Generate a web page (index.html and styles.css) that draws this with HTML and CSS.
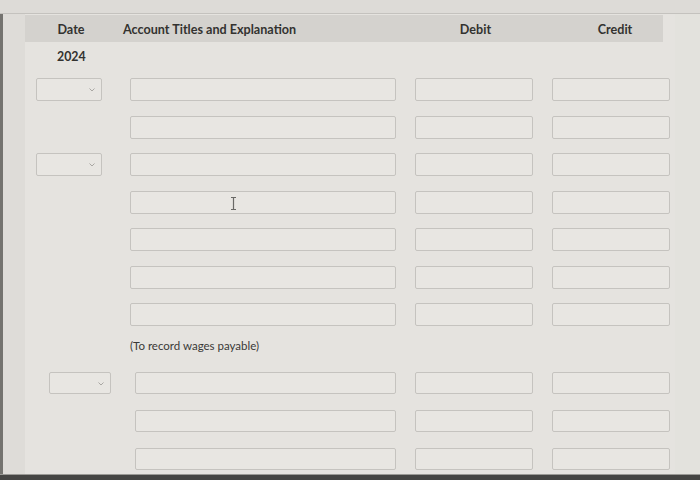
FILE: index.html
```html
<!DOCTYPE html>
<html>
<head>
<meta charset="utf-8">
<link rel="stylesheet" href="styles.css">
</head>
<body>
<div class="screen">
  <div class="topbar"></div>
  <div class="frame">
    <div class="side-left"></div>
    <div class="main">
      <div class="head">
        <div class="c-date">Date</div>
        <div class="c-acct">Account Titles and Explanation</div>
        <div class="c-num">Debit</div>
        <div class="c-num">Credit</div>
      </div>
      <div class="year">2024</div>
      <div class="rows">
        <div class="row">
          <div class="c-date"><div class="sel"><svg class="chev" width="6" height="4" viewBox="0 0 6 4"><path d="M0.5 0.5 L3 3 L5.5 0.5" fill="none" stroke="#a9a7a3" stroke-width="1"/></svg></div></div>
          <div class="c-acct"><div class="inp"></div></div>
          <div class="c-num"><div class="inp"></div></div>
          <div class="c-num"><div class="inp"></div></div>
        </div>
        <div class="row">
          <div class="c-date"></div>
          <div class="c-acct"><div class="inp"></div></div>
          <div class="c-num"><div class="inp"></div></div>
          <div class="c-num"><div class="inp"></div></div>
        </div>
        <div class="row">
          <div class="c-date"><div class="sel"><svg class="chev" width="6" height="4" viewBox="0 0 6 4"><path d="M0.5 0.5 L3 3 L5.5 0.5" fill="none" stroke="#a9a7a3" stroke-width="1"/></svg></div></div>
          <div class="c-acct"><div class="inp"></div></div>
          <div class="c-num"><div class="inp"></div></div>
          <div class="c-num"><div class="inp"></div></div>
        </div>
        <div class="row">
          <div class="c-date"></div>
          <div class="c-acct"><div class="inp"><svg class="ibeam" width="7" height="13" viewBox="0 0 7 13"><path d="M1 0.5 H6 M3.5 0.5 V12.5 M1 12.5 H6" fill="none" stroke="#6a6966" stroke-width="1.2"/></svg></div></div>
          <div class="c-num"><div class="inp"></div></div>
          <div class="c-num"><div class="inp"></div></div>
        </div>
        <div class="row">
          <div class="c-date"></div>
          <div class="c-acct"><div class="inp"></div></div>
          <div class="c-num"><div class="inp"></div></div>
          <div class="c-num"><div class="inp"></div></div>
        </div>
        <div class="row">
          <div class="c-date"></div>
          <div class="c-acct"><div class="inp"></div></div>
          <div class="c-num"><div class="inp"></div></div>
          <div class="c-num"><div class="inp"></div></div>
        </div>
        <div class="row">
          <div class="c-date"></div>
          <div class="c-acct"><div class="inp"></div></div>
          <div class="c-num"><div class="inp"></div></div>
          <div class="c-num"><div class="inp"></div></div>
        </div>
      </div>
      <div class="note">(To record wages payable)</div>
      <div class="rows rows2">
        <div class="row">
          <div class="c-date"><div class="sel sel2"><svg class="chev" width="6" height="4" viewBox="0 0 6 4"><path d="M0.5 0.5 L3 3 L5.5 0.5" fill="none" stroke="#a9a7a3" stroke-width="1"/></svg></div></div>
          <div class="c-acct"><div class="inp inp2"></div></div>
          <div class="c-num"><div class="inp"></div></div>
          <div class="c-num"><div class="inp"></div></div>
        </div>
        <div class="row">
          <div class="c-date"></div>
          <div class="c-acct"><div class="inp inp2"></div></div>
          <div class="c-num"><div class="inp"></div></div>
          <div class="c-num"><div class="inp"></div></div>
        </div>
        <div class="row">
          <div class="c-date"></div>
          <div class="c-acct"><div class="inp inp2"></div></div>
          <div class="c-num"><div class="inp"></div></div>
          <div class="c-num"><div class="inp"></div></div>
        </div>
      </div>
    </div>
    <div class="side-right"></div>
  </div>
  <div class="bottombar"></div>
</div>
</body>
</html>
```
FILE: styles.css
```css
* { box-sizing: border-box; }
html, body { margin: 0; padding: 0; }
body {
  width: 700px;
  height: 480px;
  overflow: hidden;
  background: #e5e3df;
  font-family: Lato, "Open Sans", "Liberation Sans", sans-serif;
  color: #333230;
}
.screen {
  display: flex;
  flex-direction: column;
  height: 480px;
}
.topbar {
  height: 14px;
  flex: none;
  background: #dddbd7;
  border-bottom: 1px solid #c4c2be;
}
.frame {
  flex: 1;
  display: flex;
  min-height: 0;
}
.side-left {
  width: 25px;
  flex: none;
  background: #dedcd8;
  border-left: 3px solid #74736f;
}
.main {
  width: 650px;
  flex: none;
  padding-top: 1px;
  padding-left: 11px;
}
.side-right {
  flex: 1;
  background: #e3e2dd;
}
.bottombar {
  height: 6px;
  flex: none;
  background: #454543;
  border-top: 1px solid #9a9995;
}
.head, .row {
  display: flex;
  align-items: center;
}
.head {
  height: 27px;
  width: 638px;
  margin-left: -11px;
  padding-left: 11px;
  padding-top: 2px;
  background: #d4d2ce;
  font-size: 12.6px;
  font-weight: 700;
}
.c-date { width: 66px; flex: none; margin-right: 28px; }
.c-acct { width: 266px; flex: none; margin-right: 19px; }
.c-num { width: 118px; flex: none; margin-right: 19px; }
.head .c-date { text-align: center; padding-left: 4px; }
.head .c-acct { padding-left: 0; margin-left: -7px; width: 273px; }
.head .c-num { text-align: center; padding-left: 3px; }
.head .c-num:last-child { padding-left: 8px; }
.year {
  height: 18px;
  margin-top: 6px;
  padding-left: 21px;
  font-size: 12.4px;
  font-weight: 700;
  line-height: 18px;
}
.rows {
  display: flex;
  flex-direction: column;
  gap: 14.5px;
  margin-top: 12px;
}
.row { height: 23px; }
.inp, .sel {
  height: 23px;
  border: 1px solid #c5c3bf;
  border-radius: 2px;
  background: #e8e6e2;
  position: relative;
}
.sel {
  width: 66px;
}
.sel2 { margin-left: 13px; width: 62px; }
.inp2 { margin-left: 5px; }
.chev {
  position: absolute;
  right: 6px;
  top: 9px;
}
.ibeam {
  position: absolute;
  left: 99px;
  top: 5px;
}
.note {
  height: 14px;
  margin-top: 13px;
  padding-left: 94px;
  font-size: 11.5px;
  line-height: 14px;
  color: #3a3937;
}
.rows2 {
  margin-top: 19px;
  gap: 16px;
}
.rows2 .row { height: 22px; }
.rows2 .inp, .rows2 .sel { height: 22px; }
```
